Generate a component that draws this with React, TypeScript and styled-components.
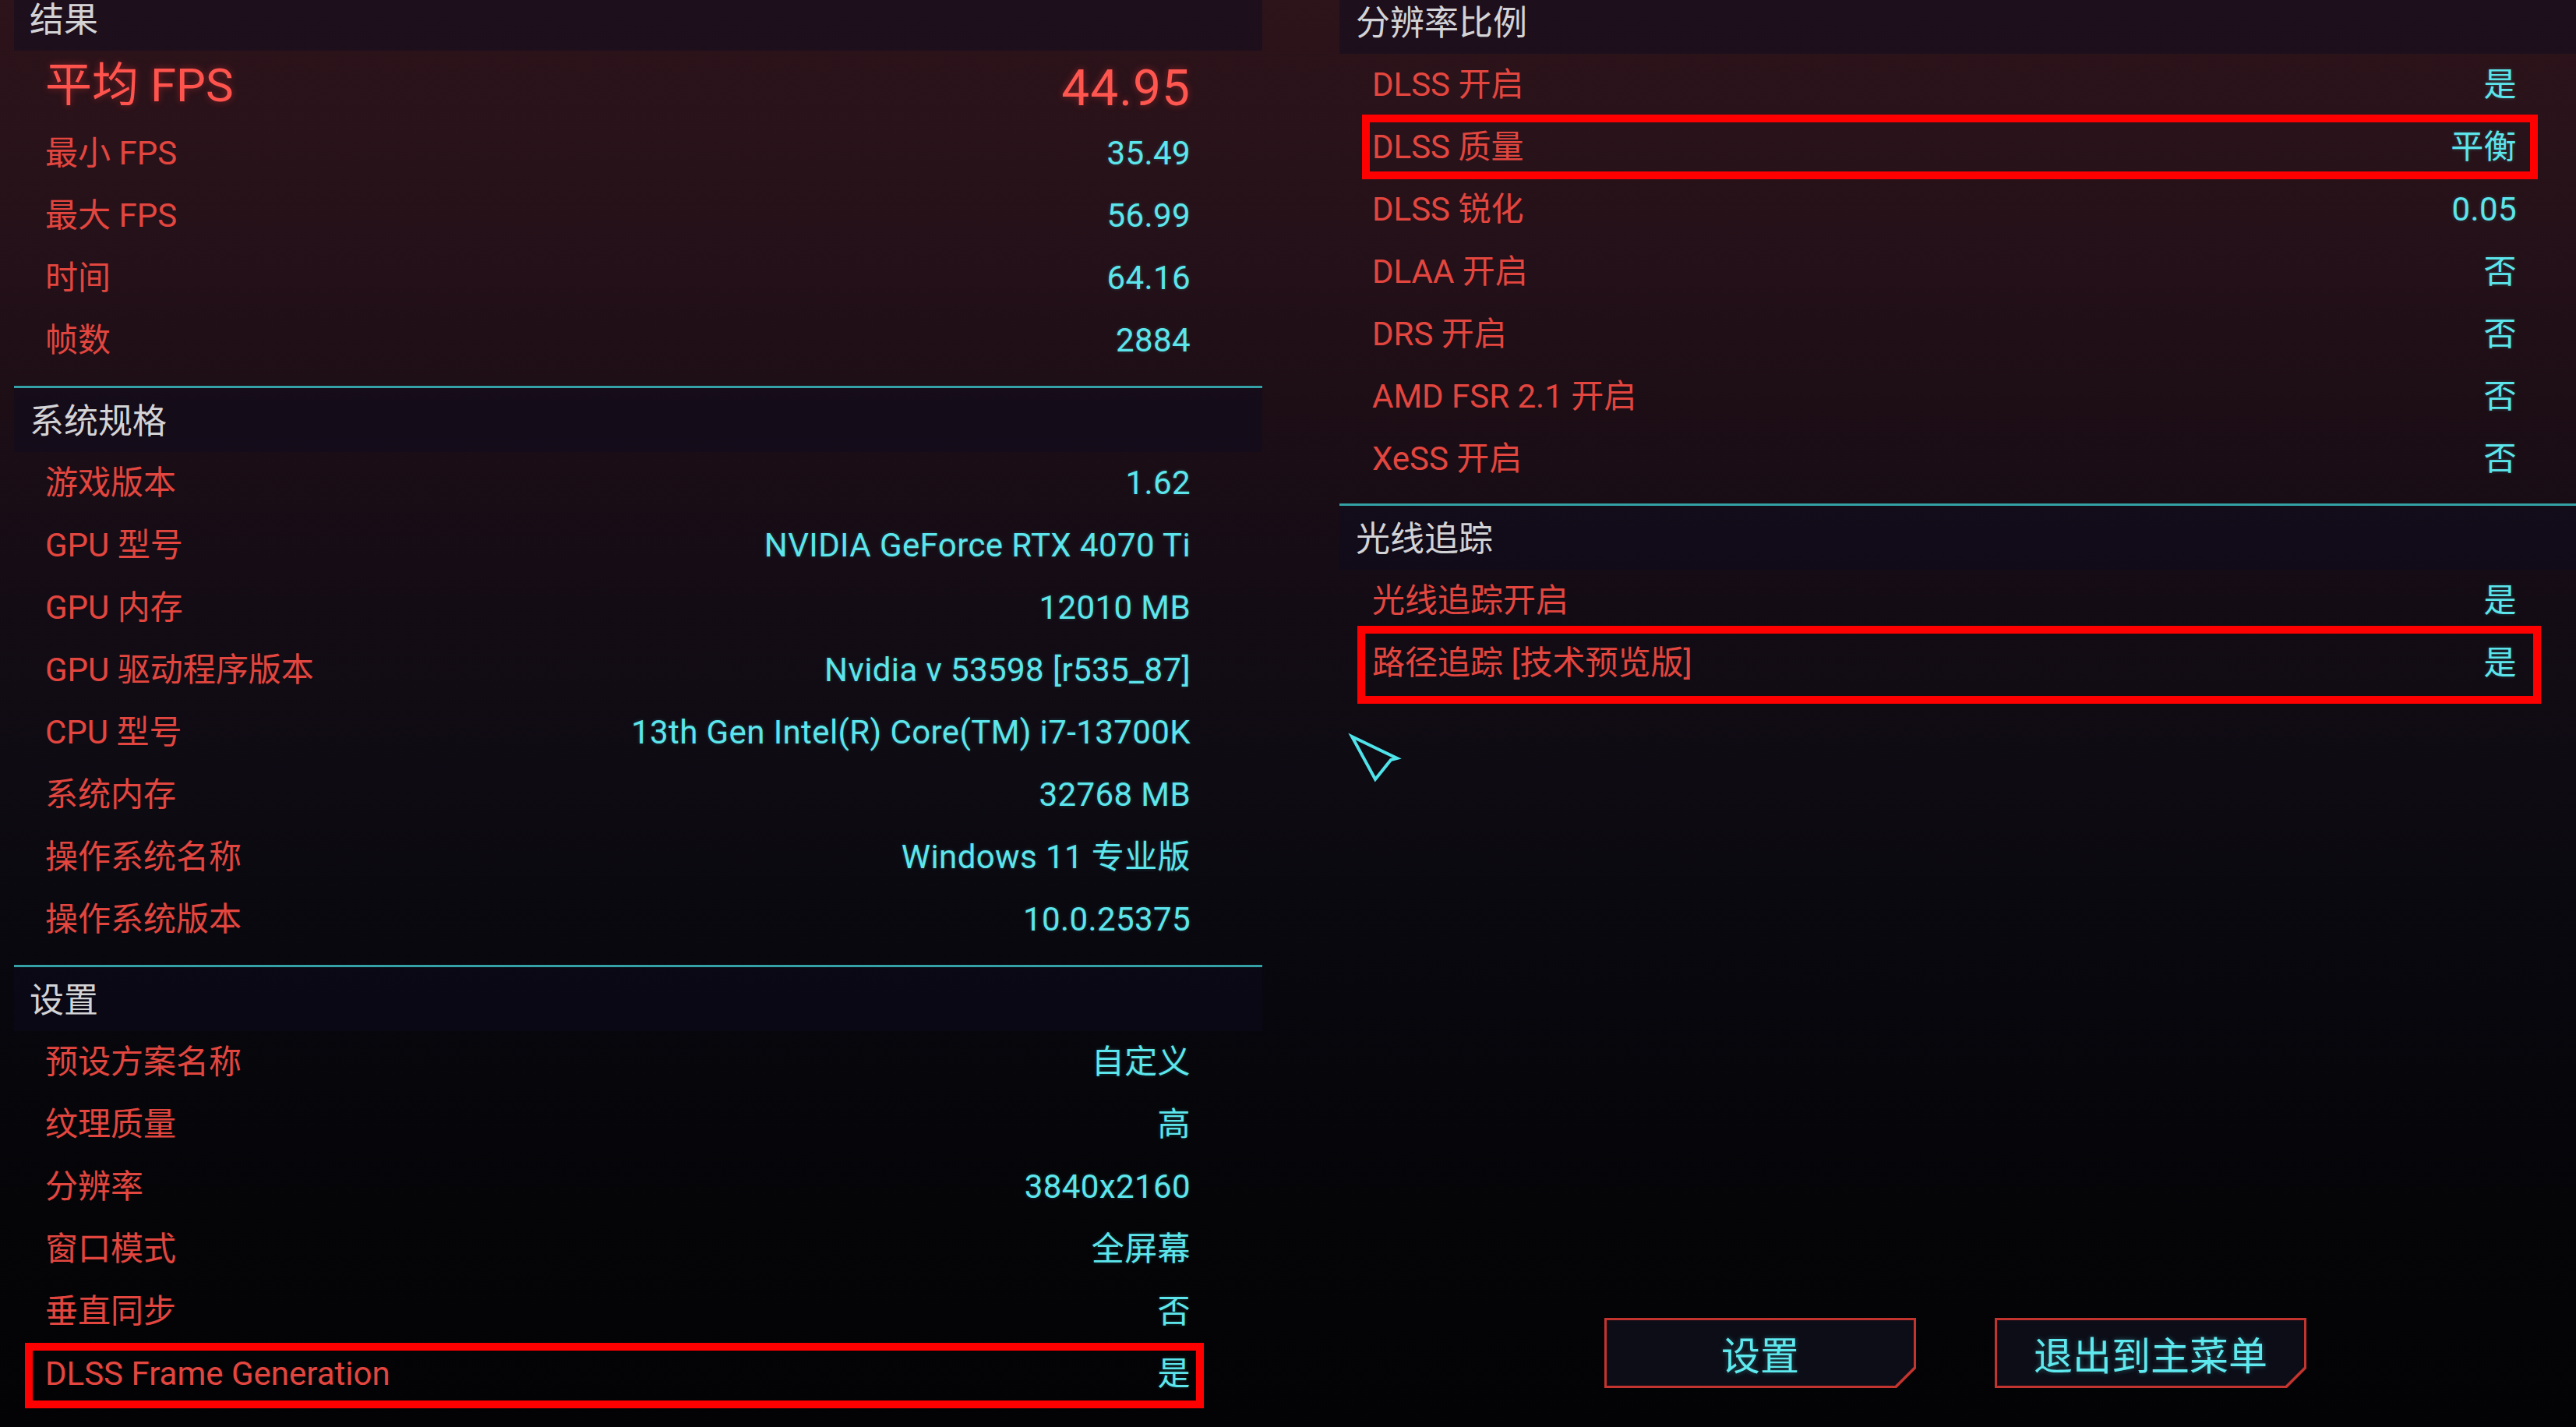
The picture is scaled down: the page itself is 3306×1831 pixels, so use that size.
import React from "react";
import styled, { createGlobalStyle } from "styled-components";

const GlobalStyle = createGlobalStyle`
  html, body {
    margin: 0;
    padding: 0;
    width: 3306px;
    height: 1831px;
    overflow: hidden;
    background: #040407;
  }
  body {
    font-family: Roboto, "Noto Sans CJK SC", sans-serif;
  }
  #root {
    width: 3306px;
    height: 1831px;
  }
`;

const Screen = styled.div`
  position: relative;
  box-sizing: border-box;
  width: 3306px;
  height: 1831px;
  overflow: hidden;
  padding-left: 18px;
  display: grid;
  grid-template-columns: 1602px 1fr;
  column-gap: 99px;
  background: linear-gradient(
    180deg,
    #2d131a 0%,
    #28121a 12%,
    #1e0e16 27%,
    #150c15 40%,
    #0e0b13 55%,
    #08070d 70%,
    #050508 85%,
    #030305 100%
  );
`;

const Panel = styled.div<{ $offset: number; $padL: number; $padR: number; $gap: number }>`
  display: flex;
  flex-direction: column;
  margin-top: ${(p) => -p.$offset}px;
  --pad-l: ${(p) => p.$padL}px;
  --pad-r: ${(p) => p.$padR}px;
  --section-gap: ${(p) => p.$gap}px;
`;

const Section = styled.section`
  display: flex;
  flex-direction: column;
  & + & {
    margin-top: var(--section-gap);
  }
`;

const Divider = styled.div`
  height: 3px;
  background: #33a1a5;
`;

const Header = styled.div<{ $indent: number }>`
  height: 82px;
  box-sizing: border-box;
  padding-top: 4px;
  display: flex;
  align-items: center;
  padding-left: ${(p) => p.$indent}px;
  font-size: 44px;
  line-height: 1;
  color: #d3d3d6;
  background: rgba(14, 12, 30, 0.45);
`;

type Box = { top: number; bottom: number; left: number; right: number };

const Row = styled.div<{ $box?: Box }>`
  position: relative;
  height: 80px;
  display: flex;
  align-items: center;
  justify-content: space-between;
  padding: 0 var(--pad-r) 0 var(--pad-l);
  font-size: 42px;
  line-height: 1;
  &::after {
    content: "";
    display: ${(p) => (p.$box ? "block" : "none")};
    position: absolute;
    top: ${(p) => p.$box?.top ?? 0}px;
    bottom: ${(p) => p.$box?.bottom ?? 0}px;
    left: ${(p) => p.$box?.left ?? 0}px;
    right: ${(p) => p.$box?.right ?? 0}px;
    border: 10px solid #ff0000;
    pointer-events: none;
  }
`;

const BigRow = styled(Row)`
  height: 90px;
  padding-bottom: 2px;
`;

const Label = styled.span`
  color: #e3463f;
  white-space: nowrap;
`;

const Value = styled.span`
  color: #5ce6ec;
  white-space: nowrap;
  letter-spacing: 0.4px;
  text-shadow: 0 0 4px rgba(92, 230, 236, 0.25);
`;

const BigLabel = styled.span`
  color: #ff534d;
  font-size: 60px;
  text-shadow: 0 0 10px rgba(255, 60, 55, 0.4);
`;

const BigValue = styled.span`
  color: #ff564f;
  font-size: 64px;
  letter-spacing: 1px;
  margin-top: 8px;
  text-shadow: 0 0 10px rgba(255, 60, 55, 0.4);
`;

const ButtonBar = styled.div`
  margin-top: auto;
  padding-bottom: 50px;
  display: flex;
  justify-content: center;
  gap: 101px;
  padding-right: 6px;
`;

const chamfer = (c: number) =>
  `polygon(0 0, 100% 0, 100% calc(100% - ${c}px), calc(100% - ${c}px) 100%, 0 100%)`;

const ButtonFrame = styled.div`
  width: 400px;
  height: 90px;
  box-sizing: border-box;
  padding: 3px;
  background: #c4342e;
  clip-path: ${chamfer(25)};
`;

const ButtonFace = styled.div`
  width: 100%;
  height: 100%;
  display: flex;
  align-items: center;
  justify-content: center;
  background: #0c0d17;
  clip-path: ${chamfer(24)};
  color: #5ee9ef;
  font-family: "Noto Sans CJK SC", sans-serif;
  font-size: 50px;
  line-height: 1;
  text-shadow: 0 0 6px rgba(94, 233, 239, 0.35);
`;

const Cursor = styled.svg`
  position: absolute;
  left: 1730px;
  top: 940px;
  width: 70px;
  height: 66px;
  overflow: visible;
`;

type Item = { label: string; value: string; box?: Box };
type Group = { title: string; big?: Item; rows: Item[] };

const leftGroups: Group[] = [
  {
    title: "结果",
    big: { label: "平均 FPS", value: "44.95" },
    rows: [
      { label: "最小 FPS", value: "35.49" },
      { label: "最大 FPS", value: "56.99" },
      { label: "时间", value: "64.16" },
      { label: "帧数", value: "2884" },
    ],
  },
  {
    title: "系统规格",
    rows: [
      { label: "游戏版本", value: "1.62" },
      { label: "GPU 型号", value: "NVIDIA GeForce RTX 4070 Ti" },
      { label: "GPU 内存", value: "12010 MB" },
      { label: "GPU 驱动程序版本", value: "Nvidia v 53598 [r535_87]" },
      { label: "CPU 型号", value: "13th Gen Intel(R) Core(TM) i7-13700K" },
      { label: "系统内存", value: "32768 MB" },
      { label: "操作系统名称", value: "Windows 11 专业版" },
      { label: "操作系统版本", value: "10.0.25375" },
    ],
  },
  {
    title: "设置",
    rows: [
      { label: "预设方案名称", value: "自定义" },
      { label: "纹理质量", value: "高" },
      { label: "分辨率", value: "3840x2160" },
      { label: "窗口模式", value: "全屏幕" },
      { label: "垂直同步", value: "否" },
      {
        label: "DLSS Frame Generation",
        value: "是",
        box: { top: 0, bottom: -4, left: 14, right: 75 },
      },
    ],
  },
];

const rightGroups: Group[] = [
  {
    title: "分辨率比例",
    rows: [
      { label: "DLSS 开启", value: "是" },
      {
        label: "DLSS 质量",
        value: "平衡",
        box: { top: -2, bottom: -1, left: 29, right: 49 },
      },
      { label: "DLSS 锐化", value: "0.05" },
      { label: "DLAA 开启", value: "否" },
      { label: "DRS 开启", value: "否" },
      { label: "AMD FSR 2.1 开启", value: "否" },
      { label: "XeSS 开启", value: "否" },
    ],
  },
  {
    title: "光线追踪",
    rows: [
      { label: "光线追踪开启", value: "是" },
      {
        label: "路径追踪 [技术预览版]",
        value: "是",
        box: { top: -8, bottom: -12, left: 23, right: 45 },
      },
    ],
  },
];

function Groups({ groups, indent }: { groups: Group[]; indent: number }) {
  return (
    <>
      {groups.map((g, i) => (
        <Section key={g.title}>
          {i > 0 && <Divider />}
          <Header $indent={indent}>{g.title}</Header>
          {g.big && (
            <BigRow>
              <BigLabel>{g.big.label}</BigLabel>
              <BigValue>{g.big.value}</BigValue>
            </BigRow>
          )}
          {g.rows.map((r) => (
            <Row key={r.label} $box={r.box}>
              <Label>{r.label}</Label>
              <Value>{r.value}</Value>
            </Row>
          ))}
        </Section>
      ))}
    </>
  );
}

export default function App() {
  return (
    <>
      <GlobalStyle />
      <Screen>
        <Panel $offset={17} $padL={40} $padR={92} $gap={18}>
          <Groups groups={leftGroups} indent={20} />
        </Panel>
        <Panel $offset={13} $padL={42} $padR={76} $gap={17}>
          <Groups groups={rightGroups} indent={21} />
          <ButtonBar>
            <ButtonFrame>
              <ButtonFace>设置</ButtonFace>
            </ButtonFrame>
            <ButtonFrame>
              <ButtonFace>退出到主菜单</ButtonFace>
            </ButtonFrame>
          </ButtonBar>
        </Panel>
        <Cursor viewBox="0 0 70 66">
          <path
            d="M5 5 L63 33 L55 35 L35 60 Z"
            fill="none"
            stroke="#4fe3ea"
            strokeWidth="4"
            strokeLinejoin="miter"
          />
        </Cursor>
      </Screen>
    </>
  );
}
